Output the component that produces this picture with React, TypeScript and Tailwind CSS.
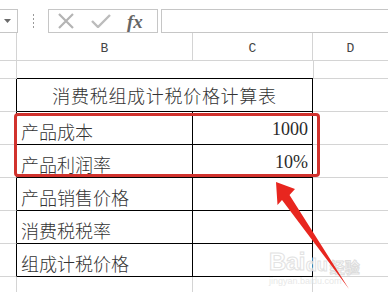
import React from "react";

const cjk = "font-['Noto_Sans_CJK_SC','Noto_Sans_CJK_JP',sans-serif]";
const serifNum = "font-['Liberation_Serif',serif]";
const mono = "font-['Liberation_Mono',monospace]";

const grid = "border-[#d4d4d4]";

type Row = { label: string; value?: string };

const rows: Row[] = [
  { label: "产品成本", value: "1000" },
  { label: "产品利润率", value: "10%" },
  { label: "产品销售价格" },
  { label: "消费税税率" },
  { label: "组成计税价格" },
];

function FormulaBar() {
  return (
    <div className="flex h-[33px] items-start pt-[9px]">
      {/* name box, cut off at the left edge */}
      <div className="flex h-[24px] w-[18px] items-center justify-start border border-l-0 border-[#c6c6c6] pl-[4px]">
        <svg width="7" height="4" viewBox="0 0 7 4">
          <path d="M0 0h7L3.5 4z" fill="#6b6b6b" />
        </svg>
      </div>
      <div className="flex h-[24px] w-[30px] items-center justify-center">
        <div className="flex flex-col gap-[2px]">
          <span className="block h-[2px] w-[1px] bg-[#9a9a9a]" />
          <span className="block h-[2px] w-[1px] bg-[#9a9a9a]" />
          <span className="block h-[2px] w-[1px] bg-[#9a9a9a]" />
          <span className="block h-[2px] w-[1px] bg-[#9a9a9a]" />
        </div>
      </div>
      <div className="flex h-[24px] w-[110px] items-center border border-[#c6c6c6]">
        <svg className="ml-[8px]" width="18" height="16" viewBox="0 0 18 16">
          <path d="M2 1L16 15M16 1L2 15" stroke="#b4b4b4" strokeWidth="2.2" />
        </svg>
        <svg className="ml-[16px]" width="20" height="14" viewBox="0 0 20 14">
          <path d="M1 7l6 6L19 1" stroke="#bcbcbc" strokeWidth="2.4" fill="none" />
        </svg>
        <span className="ml-[16px] font-['Liberation_Serif',serif] text-[19px] font-bold italic leading-none text-[#666666]">
          fx
        </span>
      </div>
      <div className="ml-[3px] h-[24px] flex-1 border border-r-0 border-[#c6c6c6]" />
    </div>
  );
}

function ColumnHeader() {
  return (
    <div className={`grid h-[28px] grid-cols-[17px_176px_120px_1fr] border-b ${grid}`}>
      <div className={`border-r ${grid}`} />
      <div className={`flex items-end justify-center border-r ${grid} pb-[2px] ${mono} text-[13px] text-[#444]`}>B</div>
      <div className={`flex items-end justify-center border-r ${grid} pb-[2px] ${mono} text-[13px] text-[#444]`}>C</div>
      <div className={`flex items-end justify-center pb-[2px] ${mono} text-[13px] text-[#444]`}>D</div>
    </div>
  );
}

export default function App() {
  return (
    <div className="relative h-[292px] w-[388px] overflow-hidden bg-white">
      <FormulaBar />
      <ColumnHeader />

      {/* blank row above the table */}
      <div className="grid h-[18px] grid-cols-[17px_176px_120px_1fr]">
        <div className={`border-r border-b ${grid}`} />
        <div className="border-b border-black" />
        <div className="border-b border-black" />
        <div className={`border-l border-b ${grid}`} />
      </div>

      {/* title row, merged over B and C */}
      <div className="grid h-[33px] grid-cols-[17px_296px_1fr]">
        <div className={`border-b ${grid} border-r-black border-r`} />
        <div className={`flex items-center justify-center border-b border-r border-black ${cjk} text-[18px] font-light tracking-[0.7px] text-[#333]`}>
          消费税组成计税价格计算表
        </div>
        <div className={`border-b ${grid}`} />
      </div>

      {rows.map((r) => (
        <div key={r.label} className="grid h-[33px] grid-cols-[17px_176px_120px_1fr]">
          <div className={`border-b ${grid} border-r border-r-black`} />
          <div className={`flex items-end border-b border-r border-black pb-[1px] pl-[4px] ${cjk} text-[18px] font-light leading-[24px] text-[#333]`}>
            {r.label}
          </div>
          <div className={`flex items-end justify-end border-b border-r border-black pb-[5px] pr-[4px] ${serifNum} text-[18px] leading-[20px] text-[#2a2a2a]`}>
            {r.value ?? ""}
          </div>
          <div className={`border-b ${grid}`} />
        </div>
      ))}

      <div className="grid h-[20px] grid-cols-[17px_176px_120px_1fr]">
        <div className={`border-r ${grid}`} />
        <div className={`border-r ${grid}`} />
        <div className={`border-r ${grid}`} />
        <div />
      </div>

      {/* faint site watermark */}
      <div className="pointer-events-none absolute left-[269px] top-[250px] flex flex-col items-start opacity-90">
        <div className="flex items-end">
          <span className="font-['Liberation_Sans',sans-serif] text-[24px] font-bold leading-none tracking-[-0.5px] text-white [-webkit-text-stroke:1px_#e0e0e0]">
            Bai
          </span>
          <span className="ml-[1px] font-['Liberation_Sans',sans-serif] text-[18px] font-bold leading-none text-white [-webkit-text-stroke:1px_#e0e0e0]">
            du
          </span>
          <span className={`ml-[2px] ${cjk} text-[15px] font-bold leading-none text-white [-webkit-text-stroke:1px_#dadada]`}>
            经验
          </span>
        </div>
        <span className="mt-[3px] font-['Liberation_Sans',sans-serif] text-[9px] leading-none text-[#e6e6e6]">
          jingyan.baidu.com
        </span>
      </div>

      {/* highlight frame */}
      <div className="pointer-events-none absolute left-[14px] top-[113px] h-[64px] w-[306px] rounded-[4px] border-[3px] border-[#d1322d]" />

      {/* pointer arrow */}
      <svg className="pointer-events-none absolute left-0 top-0" width="388" height="292" viewBox="0 0 388 292">
        <path
          d="M276 182 L295 189 L289.5 195 L349 289 L282 200 L277.5 205 Z"
          fill="#e8261f"
        />
      </svg>
    </div>
  );
}
